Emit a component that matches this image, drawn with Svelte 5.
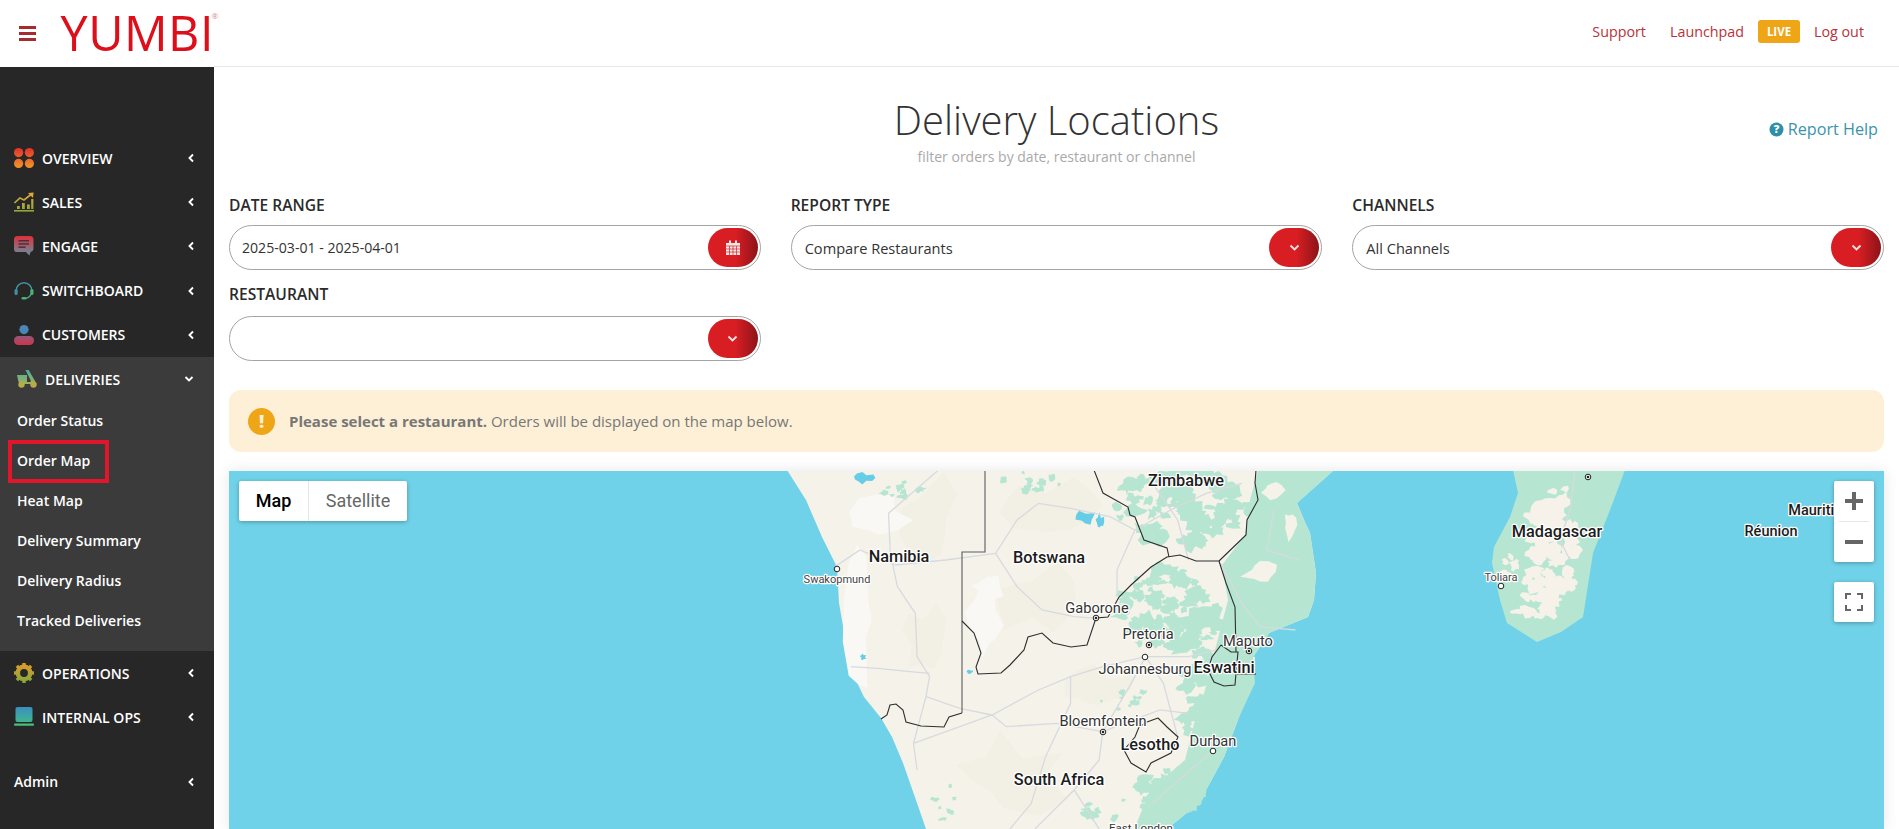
<script>
  const before = ['OVERVIEW', 'SALES', 'ENGAGE', 'SWITCHBOARD', 'CUSTOMERS'];
  const subs = ['Order Status', 'Order Map', 'Heat Map', 'Delivery Summary', 'Delivery Radius', 'Tracked Deliveries'];
  const after = ['OPERATIONS', 'INTERNAL OPS'];

  const pts = (a) => a.map((p) => p.join(',')).join(' ');

  function rng(seed) {
    let s = seed * 7919 + 13;
    return () => {
      s = (s * 1664525 + 1013904223) % 4294967296;
      return s / 4294967296;
    };
  }

  function blob(cx, cy, rx, ry, seed) {
    const rnd = rng(seed);
    rnd();
    const n = 11;
    const out = [];
    for (let i = 0; i < n; i++) {
      const t = (i / n) * Math.PI * 2;
      const k = 0.5 + rnd() * 0.8;
      out.push(`${(cx + Math.cos(t) * rx * k).toFixed(1)},${(cy + Math.sin(t) * ry * k).toFixed(1)}`);
    }
    return out.join(' ');
  }

  function scatter(regions, seed) {
    const rnd = rng(seed);
    const out = [];
    regions.forEach(([cx, cy, rx, ry, count, size]) => {
      for (let i = 0; i < count; i++) {
        const a = rnd() * Math.PI * 2;
        const d = Math.sqrt(rnd());
        const r = size * (0.4 + rnd() * 0.9);
        out.push(blob(cx + Math.cos(a) * d * rx, cy + Math.sin(a) * d * ry, r * (0.8 + rnd() * 0.8), r * (0.6 + rnd() * 0.7), Math.floor(rnd() * 9000) + 1));
      }
    });
    return out;
  }

  const africa = [[787,470],[806,500],[822,537],[837,567],[839,603],[846,643],[851,670],[864,697],[881,718],[892,737],[903,763],[917,803],[926,829],[930,840],[1155,840],[1167,829],[1199,803],[1224,757],[1239,717],[1253,683],[1255,657],[1253,657],[1269,633],[1308,617],[1314,600],[1316,573],[1310,533],[1304,520],[1297,503],[1334,470]];
  const madagascar = [[1513,470],[1518,493],[1510,517],[1494,547],[1492,563],[1500,600],[1507,623],[1537,642],[1561,632],[1583,617],[1593,553],[1610,510],[1625,470]];
  const eastGreen = [[1258,470],[1334,470],[1297,503],[1304,520],[1310,533],[1316,573],[1314,600],[1308,617],[1269,633],[1253,657],[1255,683],[1239,717],[1224,757],[1199,803],[1167,829],[1155,840],[1130,840],[1150,790],[1185,760],[1195,720],[1205,690],[1215,650],[1228,600],[1222,565],[1245,535],[1250,500]];

  const beige = [[930,520,30,46],[925,640,24,34],[1035,600,42,34],[1050,505,44,24],[1010,775,55,36],[1100,690,36,22]];
  const light = [[860,620,14,60],[985,625,18,38],[880,520,26,22],[990,590,16,12]];
  const mozLand = [[1262,572,20,15],[1290,525,8,14],[1272,490,12,10]];
  const greenPatches = scatter([
    [1180,505,70,38,90,7],
    [1170,610,52,42,90,6.5],
    [1205,700,24,50,45,7],
    [1170,790,32,26,35,6],
    [1120,810,40,14,14,4],
    [1030,482,30,10,12,3.5],
    [905,490,22,10,12,4],
    [1130,700,30,16,10,3],
    [945,800,12,20,10,2.5]
  ], 11);
  const madPatches = scatter([
    [1553,540,24,62,75,6.5],
    [1535,600,22,22,18,6],
    [1510,570,9,22,10,3.5]
  ], 29);
  const lakes = [[1086,517,9,7],[1100,522,4,8],[864,478,9,5],[863,657,3,3],[970,672,3,2]];

  const roads = [
    [[500,0],[360,130],[365,250],[385,350],[435,430],[440,560],[475,620],[465,680],[430,820],[440,900]],
    [[210,290],[280,240],[380,285],[520,270],[660,250],[720,150],[780,100],[870,115],[980,140],[1050,180],[1000,300],[1000,380]],
    [[660,250],[720,350],[790,420],[880,440],[940,445]],
    [[255,590],[330,595],[420,605],[475,610]],
    [[465,680],[560,715],[650,735],[780,660],[870,620],[960,590],[1080,560],[1200,560],[1280,540]],
    [[650,735],[690,770],[830,760],[960,785],[1120,720],[1200,730]],
    [[430,820],[650,735]],
    [[870,620],[870,700],[800,860],[760,1000],[700,1077]],
    [[960,785],[950,870],[880,960],[770,1077]],
    [[1080,560],[1040,640],[960,785]],
    [[1080,560],[1130,640],[1170,800]],
    [[1050,180],[1150,120],[1250,70],[1350,40]],
    [[1200,270],[1170,150],[1100,40]],
    [[1440,120],[1420,240],[1510,270]],
    [[1290,280],[1350,400],[1400,470],[1500,480]],
    [[880,960],[950,1077]],
    [[1268,842],[1100,1000]]
  ];

  const borders = [
    [[962,621],[974,633],[981,653],[976,667],[978,674],[1001,673],[1010,665],[1024,650],[1028,637],[1042,633],[1053,643],[1071,647],[1087,645],[1096,618],[1108,617],[1119,597],[1131,585],[1151,567],[1167,557],[1180,555],[1196,561],[1219,561]],
    [[1094,470],[1103,493],[1128,507],[1130,515],[1135,517],[1144,540],[1167,548],[1169,557]],
    [[1219,561],[1226,583],[1235,607],[1236,652]],
    [[1219,561],[1246,535],[1247,520],[1258,500],[1255,483],[1256,470]],
    [[1221,645],[1212,657],[1208,670],[1214,682],[1224,686],[1235,685],[1236,673],[1238,652],[1231,652],[1221,645]],
    [[1237,674],[1256,674]],
    [[1158,718],[1147,722],[1139,727],[1135,737],[1124,750],[1131,763],[1146,772],[1151,763],[1171,753],[1178,737],[1167,727],[1158,718]],
    [[962,713],[949,717],[944,727],[921,726],[906,722],[903,710],[896,704],[890,705],[887,715],[881,719]]
  ];
  const grayBorder = [[985,470],[985,552],[962,552],[962,713]];

  const labels = [
    ['Zimbabwe',1186,486,'b'],['Namibia',899,562,'b'],['Botswana',1049,563,'b'],['Swakopmund',837,583,'xs'],
    ['Gaborone',1097,613,'m'],['Pretoria',1148,639,'m'],['Maputo',1248,646,'m'],['Johannesburg',1145,674,'m'],
    ['Eswatini',1224,673,'b'],['Bloemfontein',1103,726,'m'],['Lesotho',1150,750,'b'],['Durban',1213,746,'m'],
    ['South Africa',1059,785,'b'],['East London',1141,832,'s'],['Madagascar',1557,537,'b'],['Toliara',1501,581,'xs'],
    ['Mauritius',1819,515,'bs'],['Réunion',1771,536,'bs']
  ];
  const capitals = [[837,569,0],[1096,618,1],[1149,645,1],[1249,651,1],[1145,657,0],[1103,732,1],[1213,751,0],[1501,586,0],[1588,477,1]];
</script>

{#snippet chev()}
  <svg class="chev" width="8" height="10" viewBox="0 0 8 10"><polyline points="6,1.5 2.5,5 6,8.5" fill="none" stroke="#fff" stroke-width="1.9" /></svg>
{/snippet}

{#snippet down()}
  <svg width="11" height="8" viewBox="0 0 11 8"><polyline points="1.5,1.5 5.5,5.5 9.5,1.5" fill="none" stroke="#fbe3e3" stroke-width="1.9" /></svg>
{/snippet}

{#snippet icon(name)}
  <svg class="ico" width="20" height="20" viewBox="0 0 20 20">
    <defs>
      <linearGradient id="g-{name}" gradientUnits="userSpaceOnUse" x1="0" y1="0" x2="0" y2="20">
        {#if name === 'OVERVIEW'}<stop offset="0" stop-color="#e0322c" /><stop offset="1" stop-color="#f0962a" />
        {:else if name === 'SALES'}<stop offset="0" stop-color="#e8a83a" /><stop offset="1" stop-color="#8aa83a" />
        {:else if name === 'ENGAGE'}<stop offset="0" stop-color="#e0303a" /><stop offset="1" stop-color="#5f93a8" />
        {:else if name === 'SWITCHBOARD'}<stop offset="0" stop-color="#3f8fa8" /><stop offset="1" stop-color="#48b27a" />
        {:else if name === 'CUSTOMERS'}<stop offset="0" stop-color="#4a86b8" /><stop offset="1" stop-color="#d0334a" />
        {:else if name === 'DELIVERIES'}<stop offset="0" stop-color="#3eb0a0" /><stop offset="1" stop-color="#c2b04a" />
        {:else if name === 'OPERATIONS'}<stop offset="0" stop-color="#e69a2a" /><stop offset="1" stop-color="#7fa83c" />
        {:else}<stop offset="0" stop-color="#3a8fc0" /><stop offset="1" stop-color="#42c080" />{/if}
      </linearGradient>
    </defs>
    {#if name === 'OVERVIEW'}
      <g fill="url(#g-OVERVIEW)"><circle cx="4.6" cy="4.6" r="4.6" /><circle cx="15.4" cy="4.6" r="4.6" /><circle cx="4.6" cy="15.4" r="4.6" /><circle cx="15.4" cy="15.4" r="4.6" /></g>
    {:else if name === 'SALES'}
      <g fill="url(#g-SALES)"><rect x="0" y="18" width="20" height="1.6" /><rect x="3" y="14" width="2.8" height="3" /><rect x="8" y="11" width="2.8" height="6" /><rect x="13" y="12.5" width="2.8" height="4.5" /><rect x="17.2" y="7" width="2.2" height="10" /><polygon points="14,1 19.6,0.5 19,6" /></g>
      <polyline points="0.5,11 6,6 10,8 17,2.5" fill="none" stroke="url(#g-SALES)" stroke-width="1.6" />
    {:else if name === 'ENGAGE'}
      <path d="M3.5 0h12.5a3.5 3.5 0 0 1 3.5 3.5v9a3.5 3.5 0 0 1-3 3.4l-1 3.6-3.6-3.4H3.5A3.5 3.5 0 0 1 0 12.5v-9A3.5 3.5 0 0 1 3.5 0z" fill="url(#g-ENGAGE)" />
      <g fill="#4a3038"><rect x="4.5" y="4" width="10.5" height="1.5" /><rect x="4.5" y="7.2" width="10.5" height="1.5" /><rect x="4.5" y="10.4" width="7" height="1.5" /></g>
    {:else if name === 'SWITCHBOARD'}
      <path d="M2.2 9.5a7.8 7.8 0 1 1 15.6 0c0 4-2.5 7.4-6.3 8" fill="none" stroke="url(#g-SWITCHBOARD)" stroke-width="1.5" />
      <rect x="0.5" y="8" width="3.2" height="6" rx="1.6" fill="#3f8fa8" /><rect x="16.3" y="8" width="3.2" height="6" rx="1.6" fill="#48b27a" /><rect x="7.5" y="16" width="5" height="2.6" rx="1.3" fill="#48b27a" />
    {:else if name === 'CUSTOMERS'}
      <circle cx="10" cy="4.6" r="4.6" fill="#4a86b8" />
      <rect x="0" y="11" width="20" height="9" rx="4.5" fill="url(#g-CUSTOMERS)" />
    {:else if name === 'DELIVERIES'}
      <path d="M0 6h10v7H1.5z" fill="url(#g-DELIVERIES)" /><path d="M8.5 1h3.2l6.3 11v3H3.5l1-2h8.5l1-1z" fill="url(#g-DELIVERIES)" />
      <circle cx="4.5" cy="15.5" r="3.2" fill="#b8ab4a" /><circle cx="16.5" cy="15.5" r="3.2" fill="#b8ab4a" />
    {:else if name === 'OPERATIONS'}
      <circle cx="10" cy="10" r="6.2" fill="none" stroke="url(#g-OPERATIONS)" stroke-width="4.4" />
      <g stroke="url(#g-OPERATIONS)" stroke-width="3.4"><line x1="10" y1="0" x2="10" y2="20" /><line x1="0" y1="10" x2="20" y2="10" /><line x1="2.9" y1="2.9" x2="17.1" y2="17.1" /><line x1="17.1" y1="2.9" x2="2.9" y2="17.1" /></g>
      <circle cx="10" cy="10" r="3.9" fill="#272727" />
    {:else}
      <rect x="1.5" y="0" width="17" height="15" rx="2" fill="url(#g-INTERNAL)" />
      <rect x="0" y="16.4" width="20" height="2.4" rx="1" fill="#46c07a" />
    {/if}
  </svg>
{/snippet}

{#snippet item(name)}
  <a class="row" href="#top">
    {@render icon(name === 'INTERNAL OPS' ? 'INTERNAL' : name)}
    <span>{name}</span>
    {@render chev()}
  </a>
{/snippet}

<header class="top">
  <div class="brand">
    <button class="burger" aria-label="Menu"><i></i><i></i><i></i></button>
    <span class="logo">YUMBI<sup>®</sup></span>
  </div>
  <nav class="links">
    <a href="#top">Support</a>
    <a href="#top">Launchpad</a>
    <span class="live">LIVE</span>
    <a href="#top">Log out</a>
  </nav>
</header>

<div class="shell">
  <aside class="side">
    {#each before as name}{@render item(name)}{/each}
    <div class="open">
      <a class="row deliveries" href="#top">
        {@render icon('DELIVERIES')}
        <span>DELIVERIES</span>
        <svg class="chev" width="10" height="8" viewBox="0 0 10 8"><polyline points="1.5,2 5,5.5 8.5,2" fill="none" stroke="#fff" stroke-width="1.9" /></svg>
      </a>
      {#each subs as s}
        <a class="sub" class:marked={s === 'Order Map'} href="#top">{s}</a>
      {/each}
    </div>
    {#each after as name}{@render item(name)}{/each}
    <a class="row admin" href="#top"><span>Admin</span>{@render chev()}</a>
  </aside>

  <main class="main">
    <div class="head">
      <div></div>
      <div class="titles">
        <h1>Delivery Locations</h1>
        <p>filter orders by date, restaurant or channel</p>
      </div>
      <a class="help" href="#top">
        <svg width="15" height="15" viewBox="0 0 15 15"><circle cx="7.5" cy="7.5" r="7" fill="#2f8fa8" /><text x="7.5" y="11.4" text-anchor="middle" class="q">?</text></svg>
        Report Help
      </a>
    </div>

    <div class="form">
      <div class="field">
        <label for="f1">DATE RANGE</label>
        <div class="pill" id="f1"><span class="date">2025-03-01 - 2025-04-01</span>
          <b class="btn"><svg width="14" height="15" viewBox="0 0 14 15"><path d="M0 3h3V0.5h2V3h4V0.5h2V3h3v12H0z" fill="#fbe3e3" /><g stroke="#c22a2e" stroke-width="0.7"><line x1="0" y1="6" x2="14" y2="6" /><line x1="0" y1="9" x2="14" y2="9" /><line x1="0" y1="12" x2="14" y2="12" /><line x1="3.5" y1="6" x2="3.5" y2="15" /><line x1="7" y1="6" x2="7" y2="15" /><line x1="10.5" y1="6" x2="10.5" y2="15" /></g></svg></b>
        </div>
      </div>
      <div class="field">
        <label for="f2">REPORT TYPE</label>
        <div class="pill" id="f2"><span>Compare Restaurants</span><b class="btn">{@render down()}</b></div>
      </div>
      <div class="field">
        <label for="f3">CHANNELS</label>
        <div class="pill" id="f3"><span>All Channels</span><b class="btn">{@render down()}</b></div>
      </div>
      <div class="field">
        <label for="f4">RESTAURANT</label>
        <div class="pill" id="f4"><span></span><b class="btn">{@render down()}</b></div>
      </div>
    </div>

    <div class="alert">
      <span class="bang">!</span>
      <p><strong>Please select a restaurant.</strong> Orders will be displayed on the map below.</p>
    </div>

    <section class="map">
      <svg class="chart" viewBox="229 471 1655 358" width="1655" height="358">
        <polygon points={pts(africa)} class="land" />
        <polygon points={pts(madagascar)} class="green" />
        {#each beige as b, i}<polygon points={blob(b[0], b[1], b[2], b[3], i + 2)} class="beige" />{/each}
        {#each light as b, i}<polygon points={blob(b[0], b[1], b[2], b[3], i + 21)} class="light" />{/each}
        <polygon points={pts(eastGreen)} class="green" />
        {#each mozLand as b, i}<polygon points={blob(b[0], b[1], b[2], b[3], i + 31)} class="land" />{/each}
        {#each greenPatches as p}<polygon points={p} class="green" />{/each}
        {#each madPatches as p}<polygon points={p} class="madland" />{/each}
        {#each lakes as b, i}<polygon points={blob(b[0], b[1], b[2], b[3], i + 81)} class="water" />{/each}

        <g transform="translate(760 470) scale(0.357 0.3333)">
          {#each roads as r}<polyline points={pts(r)} class="road" />{/each}
        </g>
        <polyline points="1575,470 1570,510 1560,540 1570,560" class="road" />

        <polyline points={pts(grayBorder)} class="graybrd" />
        {#each borders as b}<polyline points={pts(b)} class="brd" />{/each}

        {#each capitals as c}
          <circle cx={c[0]} cy={c[1]} r="2.8" class="dot" />
          {#if c[2]}<circle cx={c[0]} cy={c[1]} r="1.3" class="core" />{/if}
        {/each}
        {#each labels as l}
          <text x={l[1]} y={l[2]} class="lbl {l[3]}">{l[0]}</text>
        {/each}
      </svg>

      <div class="types">
        <span class="on">Map</span>
        <span>Satellite</span>
      </div>
      <div class="zoom">
        <svg width="40" height="40" viewBox="0 0 40 40"><path d="M18 11h4v7h7v4h-7v7h-4v-7h-7v-4h7z" fill="#666" /></svg>
        <i></i>
        <svg width="40" height="40" viewBox="0 0 40 40"><rect x="11" y="18" width="18" height="4" fill="#666" /></svg>
      </div>
      <div class="full">
        <svg width="40" height="40" viewBox="0 0 40 40"><path d="M11 17v-6h6v2h-4v4zM23 11h6v6h-2v-4h-4zM11 23h2v4h4v2h-6zM27 23h2v6h-6v-2h4z" fill="#666" /></svg>
      </div>
    </section>
  </main>
</div>

<style>
  :global(body) {
    margin: 0;
    height: 829px;
    overflow: hidden;
    background: #fff;
    font-family: "Open Sans", "Liberation Sans", sans-serif;
  }
  a {
    text-decoration: none;
  }
  .top {
    height: 67px;
    display: flex;
    justify-content: space-between;
    align-items: center;
    box-sizing: border-box;
    background: #fff;
  }
  .brand {
    display: flex;
    align-items: center;
    height: 67px;
    width: 214px;
  }
  .burger {
    display: flex;
    flex-direction: column;
    gap: 2.7px;
    width: 19px;
    margin-left: 19px;
    padding: 0;
    border: 0;
    background: none;
  }
  .burger i {
    display: block;
    height: 3.3px;
    background: #a62a2e;
  }
  .logo {
    margin-left: 25px;
    font-size: 48.5px;
    font-weight: 500;
    letter-spacing: 0.5px;
    line-height: 67px;
    color: #dc0f1b;
    position: relative;
    top: -1px;
  }
  .logo sup {
    font-size: 8px;
    font-weight: 400;
    letter-spacing: 0;
    color: #d98a8a;
    position: absolute;
    left: 151px;
    top: 13px;
    line-height: 1;
  }
  .links {
    flex: 1;
    height: 67px;
    display: flex;
    align-items: center;
    justify-content: flex-end;
    padding: 0 35px 3px 0;
    border-bottom: 1px solid #e7e7e7;
    box-sizing: border-box;
    font-size: 14.3px;
    font-weight: 500;
  }
  .links a {
    color: #b93238;
  }
  .links a:nth-child(1) {
    margin-right: 24px;
  }
  .live {
    margin: 0 14px;
    width: 42px;
    height: 23px;
    border-radius: 3px;
    background: #eea516;
    color: #fff;
    font-size: 11.5px;
    font-weight: 700;
    display: flex;
    align-items: center;
    justify-content: center;
  }
  .shell {
    display: flex;
    height: 762px;
  }
  .side {
    width: 214px;
    flex: none;
    background: #272727;
    padding-top: 69px;
    box-sizing: border-box;
  }
  .row {
    height: 44.2px;
    display: flex;
    align-items: center;
    padding: 0 19px 0 14px;
    color: #fff;
    font-size: 14px;
    font-weight: 600;
  }
  .row span {
    margin-left: 8px;
  }
  .chev {
    margin-left: auto;
  }
  .open {
    background: #3b3b3b;
    padding-bottom: 10px;
  }
  .deliveries {
    padding-left: 17px;
    padding-right: 20px;
  }
  .admin {
    margin-top: 20px;
  }
  .admin span {
    margin-left: 0;
  }
  .sub {
    display: block;
    position: relative;
    height: 40px;
    line-height: 40px;
    padding-left: 17px;
    color: #fff;
    font-size: 14px;
    font-weight: 600;
  }
  .marked::after {
    content: "";
    position: absolute;
    left: 8px;
    top: -1px;
    width: 101px;
    height: 43px;
    box-sizing: border-box;
    border: 4px solid #e2162a;
  }
  .main {
    flex: 1;
    display: flex;
    flex-direction: column;
    padding: 27px 15px 0;
    min-width: 0;
  }
  .head {
    display: grid;
    grid-template-columns: 1fr auto 1fr;
  }
  .titles {
    text-align: center;
  }
  h1 {
    margin: 0;
    font-size: 40px;
    font-weight: 300;
    line-height: 52px;
    color: #333;
  }
  .titles p {
    margin: 1px 0 0;
    font-size: 14px;
    line-height: 20px;
    color: #a9a9a9;
  }
  .help {
    justify-self: end;
    margin: 24px 6px 0 0;
    font-size: 16.2px;
    line-height: 22px;
    color: #3a93ab;
    display: flex;
    align-items: center;
    gap: 4px;
    height: 22px;
  }
  .q {
    fill: #fff;
    font-size: 11px;
    font-weight: 800;
  }
  .form {
    display: grid;
    grid-template-columns: repeat(3, 1fr);
    column-gap: 30px;
    row-gap: 14px;
    margin-top: 28px;
  }
  label {
    display: block;
    height: 20px;
    line-height: 20px;
    font-size: 15.6px;
    font-weight: 600;
    color: #2b2b2b;
  }
  .pill {
    margin-top: 10px;
    height: 45px;
    box-sizing: border-box;
    border: 1px solid #a4a4a4;
    border-radius: 23px;
    display: flex;
    align-items: center;
    justify-content: space-between;
    padding: 0 2px 0 13px;
    font-size: 14.6px;
    color: #333;
  }
  .date {
    font-size: 14.1px;
    margin-left: -1px;
  }
  .field:nth-child(4) .pill {
    margin-top: 12px;
  }
  .btn {
    width: 50px;
    height: 39px;
    border-radius: 20px;
    background: linear-gradient(90deg, #d81e23 0%, #d81e23 55%, #8c1418 100%);
    display: flex;
    align-items: center;
    justify-content: center;
  }
  .alert {
    margin-top: 29px;
    height: 62px;
    border-radius: 12px;
    background: #fdf0d6;
    display: flex;
    align-items: center;
    padding-left: 19px;
  }
  .bang {
    width: 27px;
    height: 27px;
    border-radius: 50%;
    background: #eea516;
    color: #fdf0d6;
    font-weight: 800;
    font-size: 18px;
    line-height: 27px;
    text-align: center;
  }
  .alert p {
    margin: 0 0 0 14px;
    font-size: 15px;
    color: #777;
  }
  .alert strong {
    font-weight: 700;
  }
  .map {
    margin-top: 19px;
    flex: 1;
    position: relative;
    background: #70d2e8;
    overflow: hidden;
    box-shadow: 0 0 14px rgba(0, 0, 0, 0.1);
    min-height: 0;
  }
  .chart {
    display: block;
  }
  .land { fill: #f5f2ea; }
  .green { fill: #b6e6d2; }
  .beige { fill: #f2efe4; }
  .light { fill: #faf8f4; }
  .madland { fill: #f6f2ea; }
  .water { fill: #66cde6; }
  .road {
    fill: none;
    stroke: #d7dade;
    stroke-width: 1.3;
    vector-effect: non-scaling-stroke;
  }
  .graybrd {
    fill: none;
    stroke: #5c5c5c;
    stroke-width: 1.1;
  }
  .brd {
    fill: none;
    stroke: #2e2e2e;
    stroke-width: 1.1;
  }
  .dot { fill: #fff; stroke: #222; stroke-width: 1; }
  .core { fill: #222; }
  .lbl {
    font-family: Roboto, sans-serif;
    text-anchor: middle;
    fill: #222;
    paint-order: stroke;
    stroke: #fff;
    stroke-width: 2.5px;
    stroke-linejoin: round;
  }
  .lbl.b { font-size: 16.3px; font-weight: 500; fill: #1c1c1c; }
  .lbl.bs { font-size: 14.5px; font-weight: 500; fill: #1c1c1c; }
  .lbl.m { font-size: 14.6px; fill: #333; }
  .lbl.s { font-size: 11.5px; fill: #333; }
  .lbl.xs { font-size: 11px; fill: #444; }
  .types {
    position: absolute;
    left: 10px;
    top: 10px;
    height: 40px;
    width: 168px;
    background: #fff;
    border-radius: 2px;
    box-shadow: 0 1px 4px rgba(0, 0, 0, 0.3);
    display: grid;
    grid-template-columns: 69px 1fr;
    font-family: Roboto, sans-serif;
    font-size: 18px;
    line-height: 40px;
    text-align: center;
    color: #666;
  }
  .types span + span {
    border-left: 1px solid #e6e6e6;
  }
  .types .on {
    color: #000;
    font-weight: 500;
  }
  .zoom, .full {
    position: absolute;
    right: 10px;
    width: 40px;
    background: #fff;
    border-radius: 2px;
    box-shadow: 0 1px 4px rgba(0, 0, 0, 0.3);
  }
  .zoom { top: 10px; height: 81px; }
  .full { top: 111px; height: 40px; }
  .zoom svg, .full svg { display: block; }
  .zoom i {
    display: block;
    height: 1px;
    margin: 0 5px;
    background: #e6e6e6;
  }
</style>
